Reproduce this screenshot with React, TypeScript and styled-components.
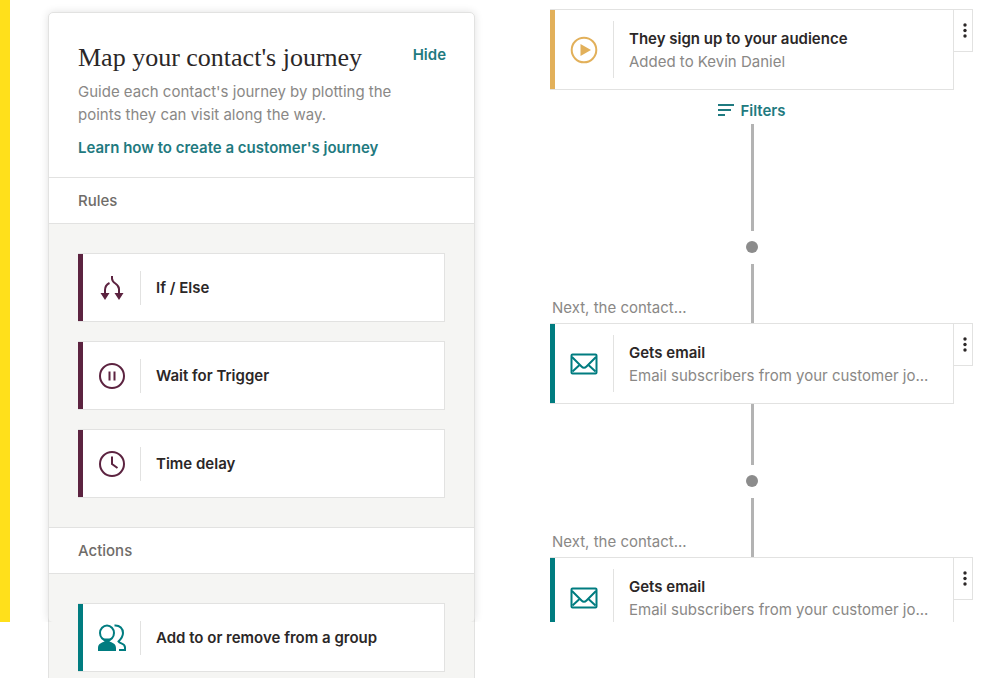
import React from "react";
import styled, { createGlobalStyle } from "styled-components";

const color = {
  yellow: "#ffe01b",
  plum: "#5c2340",
  teal: "#007c80",
  link: "#1f7a80",
  gold: "#e2b05a",
  ink: "#2b2727",
  muted: "#8a8886",
  label: "#6f6c69",
  border: "#e2e2e1",
  canvas: "#f5f5f3",
  line: "#b3b3b3",
  dot: "#8c8c8c",
};

const GlobalStyle = createGlobalStyle`
  * { box-sizing: border-box; }
  body {
    margin: 0;
    background: #fff;
    color: ${color.ink};
    font-family: Inter, "Liberation Sans", sans-serif;
    font-size: 15px;
    line-height: 23px;
  }
  h1, h2, h3, p, ul { margin: 0; padding: 0; font-size: inherit; font-weight: inherit; }
  button { font: inherit; color: inherit; cursor: pointer; }
`;

const Page = styled.div`
  display: grid;
  grid-template-columns: 10px minmax(0, 465fr) minmax(0, 498fr);
  grid-template-rows: minmax(0, 1fr);
  height: 100vh;
  padding-right: 19px;
  overflow: hidden;
`;

const Stripe = styled.div`
  background: ${color.yellow};
  margin-bottom: 56px;
`;

const Panel = styled.aside`
  position: relative;
  align-self: start;
  margin: 12px 0 0 38px;
  border: 1px solid ${color.border};
  border-radius: 5px;
  background: #fff;
`;

const PanelGlow = styled.div`
  position: absolute;
  inset: -1px;
  bottom: auto;
  height: calc(100vh - 68px);
  clip-path: inset(-8px -8px 0 -8px);
  border-radius: 5px;
  box-shadow: 0 0 8px rgba(0, 0, 0, 0.12);
  pointer-events: none;
`;

const PanelHeader = styled.header`
  padding: 30px 28px 18px 29px;
`;

const TitleRow = styled.div`
  display: flex;
  justify-content: space-between;
  align-items: flex-start;
`;

const Title = styled.h1`
  font-family: "Liberation Serif", serif;
  font-size: 26px;
  line-height: 30px;
  white-space: nowrap;
`;

const HideButton = styled.button`
  border: 0;
  padding: 0;
  background: none;
  color: ${color.link};
  font-weight: 600;
`;

const Intro = styled.p`
  max-width: 340px;
  margin-top: 7px;
  color: ${color.muted};
`;

const LearnLink = styled.a`
  display: block;
  margin-top: 10px;
  color: ${color.link};
  font-weight: 600;
  white-space: nowrap;
  text-decoration: none;
`;

const SectionTitle = styled.h2`
  padding: 11px 29px;
  border: 1px solid ${color.border};
  border-width: 1px 0;
  color: ${color.label};
  font-weight: 500;
`;

const StepList = styled.ul`
  display: grid;
  gap: 19px;
  padding: 29px;
  background: ${color.canvas};
  list-style: none;
`;

const StepCard = styled.button<{ $accent: string }>`
  display: flex;
  align-items: center;
  width: 100%;
  height: 69px;
  padding: 0;
  border: 1px solid ${color.border};
  border-left: 0;
  background: linear-gradient(${(p) => p.$accent}, ${(p) => p.$accent}) left / 5px 100% no-repeat border-box #fff;
  color: ${color.ink};
  font-weight: 600;
  text-align: left;
`;

const IconCell = styled.span<{ $tall?: boolean }>`
  display: flex;
  flex: none;
  align-items: center;
  justify-content: center;
  width: ${(p) => (p.$tall ? "64px" : "63px")};
  height: ${(p) => (p.$tall ? "57px" : "34px")};
  padding-left: 5px;
  border-right: 1px solid ${color.border};
`;

const StepName = styled.span`
  padding-left: 15px;
`;

const Journey = styled.main`
  display: flex;
  flex-direction: column;
  margin: 9px 0 56px 75px;
  overflow: hidden;
`;

const Node = styled.article`
  display: grid;
  flex: none;
  grid-template-columns: minmax(0, 1fr) 19px;
  align-items: start;
`;

const NodeCard = styled.div<{ $accent: string }>`
  display: flex;
  align-items: center;
  height: 81px;
  border: 1px solid ${color.border};
  border-left: 0;
  background: linear-gradient(${(p) => p.$accent}, ${(p) => p.$accent}) left / 5px 100% no-repeat border-box #fff;
`;

const NodeText = styled.div`
  min-width: 0;
  padding: 0 8px 0 15px;
`;

const NodeTitle = styled.h3`
  font-weight: 600;
`;

const NodeDetail = styled.p`
  color: ${color.muted};
  white-space: nowrap;
`;

const MenuButton = styled.button`
  display: flex;
  justify-content: center;
  height: 43px;
  padding: 13px 0 0 3px;
  border: 1px solid ${color.border};
  border-left: 0;
  background: #fff;
`;

const FilterButton = styled.button`
  display: flex;
  flex: none;
  align-items: center;
  align-self: center;
  gap: 6px;
  margin: 9px 19px 2px 0;
  padding: 0;
  border: 0;
  background: none;
  color: ${color.link};
  font-weight: 600;
`;

const Connector = styled.div<{ $height: number }>`
  flex: none;
  align-self: center;
  width: 3px;
  height: ${(p) => p.$height}px;
  margin-right: 19px;
  background: ${color.line};
`;

const Dot = styled.div`
  flex: none;
  align-self: center;
  width: 12px;
  height: 12px;
  margin: 10px 19px 11px 0;
  border-radius: 50%;
  background: ${color.dot};
`;

const LeadIn = styled.div`
  display: grid;
  flex: none;
  grid-template-columns: 1fr 3px 1fr;
  height: 59px;
  margin-right: 19px;
`;

const LeadText = styled.p`
  align-self: end;
  padding: 0 0 4px 2px;
  color: ${color.muted};
`;

const LeadLine = styled.span`
  background: ${color.line};
`;

const BranchIcon = () => (
  <svg width="26" height="26" viewBox="0 0 26 26" fill="none" stroke={color.plum} strokeWidth="2" aria-hidden="true">
    <path d="M13 1v2.500C13 9 20 8 20 14v6" />
    <path d="M10.500 8C7.500 9.500 6 12 6 15v5" />
    <path d="M1.500 18h9L6 25zM15.500 18h9L20 25z" fill={color.plum} stroke="none" />
  </svg>
);

const PauseIcon = () => (
  <svg width="28" height="28" viewBox="0 0 28 28" fill="none" stroke={color.plum} strokeWidth="2" aria-hidden="true">
    <circle cx="14" cy="14" r="12" />
    <path d="M11.500 9.500v9M16.500 9.500v9" />
  </svg>
);

const ClockIcon = () => (
  <svg width="28" height="28" viewBox="0 0 28 28" fill="none" stroke={color.plum} strokeWidth="2" aria-hidden="true">
    <circle cx="14" cy="14" r="12" />
    <path d="M14 6.500V14l5.500 4" />
  </svg>
);

const PeopleIcon = () => (
  <svg width="30" height="28" viewBox="0 0 30 28" fill="none" stroke={color.teal} strokeWidth="2" aria-hidden="true">
    <ellipse cx="10" cy="9" rx="7" ry="7.500" />
    <path d="M1 27v-3c0-4 3-5 6.500-6.500L6 14.500h8l-1.500 3C16 19 19 20 19 24v3z" fill={color.teal} stroke="none" />
    <path d="M17.500 1.500C23 1 26 5 26 9c0 4-2 6-4.500 8.500 1.500 2.500 6.500 1.500 6.500 6V26h-6" />
  </svg>
);

const PlayIcon = () => (
  <svg width="28" height="28" viewBox="0 0 28 28" aria-hidden="true">
    <circle cx="14" cy="14" r="12.300" fill="none" stroke={color.gold} strokeWidth="2" />
    <path d="M10.500 8v12L21 14z" fill={color.gold} />
  </svg>
);

const MailIcon = () => (
  <svg width="28" height="22" viewBox="0 0 28 22" fill="none" stroke={color.teal} strokeWidth="2" aria-hidden="true">
    <rect x="1.500" y="1.500" width="25" height="19" rx="1" />
    <path d="M2 4l9.500 9.500q2.500 2.500 5 0L26 4M2.500 18.500L9 12.500M25.500 18.500L19 12.500" />
  </svg>
);

const FilterIcon = () => (
  <svg width="16" height="14" viewBox="0 0 16 14" fill="none" stroke={color.link} strokeWidth="2" aria-hidden="true">
    <path d="M0 1h16M0 6h13M0 11h7" />
  </svg>
);

const DotsIcon = () => (
  <svg width="4" height="16" viewBox="0 0 4 16" fill={color.ink} aria-hidden="true">
    <circle cx="2" cy="2" r="1.700" />
    <circle cx="2" cy="7.500" r="1.700" />
    <circle cx="2" cy="13" r="1.700" />
  </svg>
);

type StepProps = { accent: string; icon: React.ReactNode; name: string };

const Step = ({ accent, icon, name }: StepProps) => (
  <li>
    <StepCard type="button" $accent={accent}>
      <IconCell>{icon}</IconCell>
      <StepName>{name}</StepName>
    </StepCard>
  </li>
);

type JourneyNodeProps = { accent: string; icon: React.ReactNode; title: string; detail: string };

const JourneyNode = ({ accent, icon, title, detail }: JourneyNodeProps) => (
  <Node>
    <NodeCard $accent={accent}>
      <IconCell $tall>{icon}</IconCell>
      <NodeText>
        <NodeTitle>{title}</NodeTitle>
        <NodeDetail>{detail}</NodeDetail>
      </NodeText>
    </NodeCard>
    <MenuButton type="button" aria-label={`Options: ${title}`}>
      <DotsIcon />
    </MenuButton>
  </Node>
);

const NextStep = () => (
  <LeadIn>
    <LeadText>Next, the contact...</LeadText>
    <LeadLine />
  </LeadIn>
);

const EmailNode = () => (
  <JourneyNode
    accent={color.teal}
    icon={<MailIcon />}
    title="Gets email"
    detail="Email subscribers from your customer jo..."
  />
);

export default function App() {
  return (
    <>
      <GlobalStyle />
      <Page>
        <Stripe />
        <Panel>
          <PanelGlow />
          <PanelHeader>
            <TitleRow>
              <Title>Map your contact's journey</Title>
              <HideButton type="button">Hide</HideButton>
            </TitleRow>
            <Intro>Guide each contact's journey by plotting the points they can visit along the way.</Intro>
            <LearnLink href="#learn">Learn how to create a customer's journey</LearnLink>
          </PanelHeader>
          <SectionTitle>Rules</SectionTitle>
          <StepList>
            <Step accent={color.plum} icon={<BranchIcon />} name="If / Else" />
            <Step accent={color.plum} icon={<PauseIcon />} name="Wait for Trigger" />
            <Step accent={color.plum} icon={<ClockIcon />} name="Time delay" />
          </StepList>
          <SectionTitle>Actions</SectionTitle>
          <StepList>
            <Step accent={color.teal} icon={<PeopleIcon />} name="Add to or remove from a group" />
          </StepList>
        </Panel>
        <Journey>
          <JourneyNode
            accent={color.gold}
            icon={<PlayIcon />}
            title="They sign up to your audience"
            detail="Added to Kevin Daniel"
          />
          <FilterButton type="button">
            <FilterIcon />
            Filters
          </FilterButton>
          <Connector $height={107} />
          <Dot />
          <NextStep />
          <EmailNode />
          <Connector $height={61} />
          <Dot />
          <NextStep />
          <EmailNode />
        </Journey>
      </Page>
    </>
  );
}
